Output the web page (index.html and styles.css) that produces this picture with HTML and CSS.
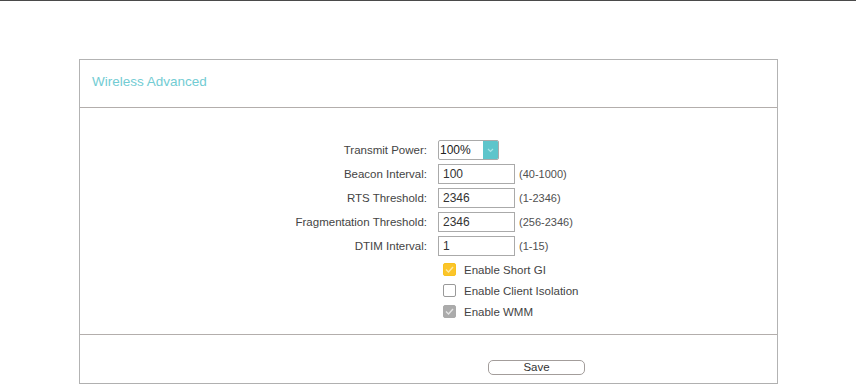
FILE: index.html
```html
<!DOCTYPE html>
<html lang="en">
<head>
  <meta charset="UTF-8">
  <meta name="viewport" content="width=device-width, initial-scale=1.0">
  <title>Wireless Advanced</title>
  <link rel="stylesheet" href="styles.css">
</head>
<body>

  <div class="topbar"></div>

  <div class="panel">
    <div class="panel-head">
      <h2>Wireless Advanced</h2>
    </div>

    <form class="panel-body" onsubmit="return false">
      <div class="row">
        <label>Transmit Power:</label>
        <div class="field">
          <div class="select">
            <span class="select-value">100%</span>
            <span class="select-arrow">
              <svg width="7" height="5" viewBox="0 0 7 5"><path d="M1 1l2.5 2.5L6 1" fill="none" stroke="#a8e4e6" stroke-width="1.2"/></svg>
            </span>
          </div>
        </div>
      </div>

      <div class="row">
        <label for="beacon">Beacon Interval:</label>
        <div class="field">
          <input type="text" id="beacon" value="100">
          <span class="range">(40-1000)</span>
        </div>
      </div>

      <div class="row">
        <label for="rts">RTS Threshold:</label>
        <div class="field">
          <input type="text" id="rts" value="2346">
          <span class="range">(1-2346)</span>
        </div>
      </div>

      <div class="row">
        <label for="frag">Fragmentation Threshold:</label>
        <div class="field">
          <input type="text" id="frag" value="2346">
          <span class="range">(256-2346)</span>
        </div>
      </div>

      <div class="row">
        <label for="dtim">DTIM Interval:</label>
        <div class="field">
          <input type="text" id="dtim" value="1">
          <span class="range">(1-15)</span>
        </div>
      </div>

      <div class="check-row first">
        <span class="box checked"><svg width="9" height="7" viewBox="0 0 9 7"><path d="M1 3.5l2.5 2.5L8 1" fill="none" stroke="#ffe9a6" stroke-width="1.4"/></svg></span>
        <span class="check-label">Enable Short GI</span>
      </div>

      <div class="check-row">
        <span class="box"></span>
        <span class="check-label">Enable Client Isolation</span>
      </div>

      <div class="check-row">
        <span class="box disabled"><svg width="9" height="7" viewBox="0 0 9 7"><path d="M1 3.5l2.5 2.5L8 1" fill="none" stroke="#e4e4e4" stroke-width="1.4"/></svg></span>
        <span class="check-label">Enable WMM</span>
      </div>
    </form>

    <div class="panel-foot">
      <button type="button" class="save">Save</button>
    </div>
  </div>

</body>
</html>
```

FILE: styles.css
```css
body {
  font-family: "Liberation Sans", Arial, sans-serif;
  margin: 0;
  padding: 0;
  background-color: #fff;
  color: #444;
}

.topbar {
  height: 1px;
  background-color: #4a4a4a;
}

.panel {
  width: 697px;
  margin: 58px 0 0 79px;
  border: 1px solid #b3b3b3;
  border-bottom-color: #b0b0b0;
}

.panel-head {
  height: 48px;
  padding: 14px 0 0 12px;
  box-sizing: border-box;
  border-bottom: 1px solid #b3aeac;
}

.panel-head h2 {
  margin: 0;
  font-size: 13.5px;
  line-height: 16px;
  font-weight: normal;
  color: #72ccd3;
}

.panel-body {
  margin: 0;
  padding: 30px 0 12px 0;
}

.row {
  display: flex;
  align-items: center;
  height: 24px;
}

.row label {
  width: 347px;
  margin-right: 11px;
  text-align: right;
  font-size: 11.5px;
  color: #444;
}

.field {
  display: flex;
  align-items: center;
}

.field input[type="text"] {
  width: 77px;
  height: 20px;
  padding: 0 0 0 4px;
  border: 1px solid #aaa;
  box-sizing: border-box;
  font-family: "Liberation Sans", Arial, sans-serif;
  font-size: 12px;
  color: #333;
  outline: none;
}

.range {
  margin-left: 4px;
  font-size: 11px;
  color: #505050;
}

.select {
  display: flex;
  width: 61px;
  height: 20px;
  border: 1px solid #aaa;
  border-radius: 2px;
  box-sizing: border-box;
  overflow: hidden;
}

.select-value {
  flex: 1;
  padding-left: 1px;
  font-size: 12px;
  line-height: 18px;
  color: #222;
}

.select-arrow {
  width: 15px;
  display: flex;
  align-items: center;
  justify-content: center;
  background-color: #5ec5cb;
}

.check-row {
  display: flex;
  align-items: center;
  height: 21px;
  padding-left: 363px;
}

.check-row.first {
  margin-top: 1px;
}

.box {
  width: 13px;
  height: 13px;
  border: 1px solid #999;
  border-radius: 2px;
  box-sizing: border-box;
  display: flex;
  align-items: center;
  justify-content: center;
  background-color: #fff;
}

.box.checked {
  border-color: #f9c21e;
  background-color: #fbc52a;
}

.box.disabled {
  border-color: #aaa;
  background-color: #ababab;
}

.check-label {
  margin-left: 8px;
  font-size: 11.5px;
  color: #444;
}

.panel-foot {
  height: 49px;
  padding: 22px 0 0 408px;
  box-sizing: border-box;
  border-top: 1px solid #b3aeac;
}

.save {
  width: 97px;
  height: 15px;
  padding: 0;
  border: 1px solid #a39d9b;
  border-radius: 5px;
  background-color: #fff;
  font-family: "Liberation Sans", Arial, sans-serif;
  font-size: 11.5px;
  line-height: 13px;
  color: #333;
  cursor: pointer;
}
```
